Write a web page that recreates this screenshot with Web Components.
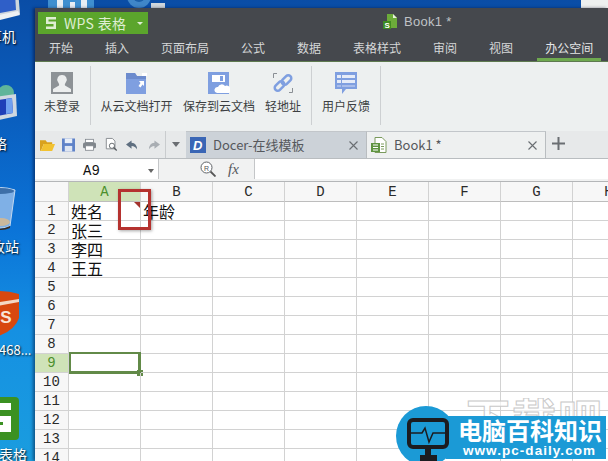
<!DOCTYPE html>
<html lang="zh">
<head>
<meta charset="utf-8">
<title>WPS 表格</title>
<style>
    html, body { margin: 0; height: 100%; overflow: hidden; }
</style>
</head>
<body>
<wps-desktop>
    <desktop-item style="left:-18px;top:-12px"><svg width="46" height="36" viewBox="0 0 46 36"><path d="M6 2h30l2 24-26 6-6-6z" fill="#cfd6dc"/><path d="M11 5h22l1 17-21 4z" fill="#2f5fc8"/><path d="M12 28l24-5 2 4-24 6z" fill="#eef1f3"/></svg></desktop-item>
    <desktop-label style="left:-12px;top:29px">算机</desktop-label>
    <desktop-item style="left:-18px;top:84px"><svg width="40" height="42" viewBox="0 0 40 42"><circle cx="24" cy="9" r="8" fill="#5fb59a"/><path d="M4 14l30-4 1 22-27 6-4-6z" fill="#cfd8e0"/><path d="M9 17l21-3 1 15-20 4z" fill="#1f3fb8"/><path d="M24 15l6-1 1 15-7 1z" fill="#6fa0f0"/></svg></desktop-item>
    <desktop-label style="left:-7px;top:136px">络</desktop-label>
    <desktop-item style="left:-14px;top:187px"><svg width="30" height="44" viewBox="0 0 30 44"><path d="M0 3q14-5 29 0l-5 36q-9 4-19 0z" fill="#7fb0e6" stroke="#c4d8ee"/><ellipse cx="14" cy="4" rx="14" ry="3" fill="#3d6fa8"/><ellipse cx="15" cy="35" rx="9" ry="4" fill="#cbb89c"/><path d="M5 40q9 4 19-1v2q-9 4-19 0z" fill="#3a2a20"/></svg></desktop-item>
    <desktop-label style="left:-9px;top:239px">收站</desktop-label>
    <desktop-item style="left:-22px;top:290px"><svg width="42" height="46" viewBox="0 0 42 46"><path d="M0 4q20-6 41 0v24q-4 12-20 18Q4 40 0 28z" fill="#d8480f"/><path d="M4 15l37-6v3l-37 7z" fill="#f4d8c4"/><text x="11" y="33" font-size="17" font-weight="700" fill="#f8e6d8" font-family="Liberation Sans">PS</text></svg></desktop-item>
    <desktop-label style="left:-1px;top:342px;font-size:13px">468...</desktop-label>
    <desktop-item style="left:-24px;top:397px"><svg width="43" height="43" viewBox="0 0 43 43"><rect width="43" height="43" rx="4" fill="#3b9122"/><path d="M11 6h24v7H19v6h16v16H11v-7h16v-3H11z" fill="#fff"/></svg></desktop-item>
    <desktop-label style="left:-1px;top:447px">表格</desktop-label>

    <desktop-item style="left:48px;top:-2px"><svg width="46" height="11" viewBox="0 0 46 11"><rect width="46" height="11" fill="#3f8fd0"/><rect x="9" y="0" width="6" height="11" fill="#e8eef4"/><rect x="22" y="4" width="5" height="7" fill="#e8eef4"/><rect x="33" y="2" width="6" height="9" fill="#e8eef4"/></svg></desktop-item>
    <desktop-item style="left:125px;top:-6px"><svg width="44" height="15" viewBox="0 0 44 15"><circle cx="14" cy="2" r="12" fill="#3f86c8"/><circle cx="14" cy="2" r="6" fill="#1b5fa8"/><rect x="26" y="9" width="14" height="6" fill="#cfd6dc"/></svg></desktop-item>
    <desktop-item style="left:581px;top:0"><svg width="27" height="8"><rect width="27" height="8" fill="#eef0ef"/></svg></desktop-item>

    <wps-window>
        <title-bar slot="top"></title-bar>
        <wps-ribbon slot="top">
            <ribbon-btn label="未登录" w="36">
                <svg width="22" height="22" viewBox="0 0 22 22"><rect width="22" height="22" fill="#8d9296"/><path d="M11 3a4.500 4.500 0 0 1 4 7c-.8 1.400-1.500 2.500-1 3.500l6 3.500v3H2v-3l6-3.500c.5-1-.2-2.100-1-3.500a4.500 4.500 0 0 1 4-7z" fill="#eceeee"/></svg>
            </ribbon-btn>
            <ribbon-sep style="margin-right:-1px"></ribbon-sep>
            <ribbon-btn label="从云文档打开" w="73">
                <svg width="22" height="22" viewBox="0 0 22 22"><path d="M0 1h9l2 3h9v18H0z" fill="#7f9fe0"/><path d="M0 1h9l2 3h9v3H0z" fill="#5f7fc0" opacity=".6"/><path d="M13 9h5v5l-1.500-1.500-2 3-2-1.500 2-3z" fill="#fff"/><rect x="16" y="1" width="5" height="3" fill="#fff"/></svg>
            </ribbon-btn>
            <ribbon-btn label="保存到云文档" w="72">
                <svg width="22" height="22" viewBox="0 0 22 22"><rect width="21" height="22" fill="#7f9fe0"/><rect x="4" y="3" width="13" height="7" fill="#fff"/><rect x="12" y="4" width="3" height="5" fill="#7f9fe0"/><path d="M9 21a3 3 0 0 1 1-6 4 4 0 0 1 7-1 3.500 3.500 0 0 1 5 4 2.500 2.500 0 0 1-1 3z" fill="#fff"/></svg>
            </ribbon-btn>
            <ribbon-btn label="轻地址" w="36">
                <svg width="22" height="22" viewBox="0 0 22 22"><g fill="none" stroke="#8a8f94"><path d="M5 1.500H1.500V6M17 20.500h3.500V16"/></g><g fill="none" stroke="#7f9fe0" stroke-width="2.500"><rect x="2" y="11" width="11" height="6" rx="3" transform="rotate(-45 7.500 14)"/><rect x="9" y="5" width="11" height="6" rx="3" transform="rotate(-45 14.500 8)"/></g></svg>
            </ribbon-btn>
            <ribbon-sep></ribbon-sep>
            <ribbon-btn label="用户反馈" w="48">
                <svg width="22" height="22" viewBox="0 0 22 22"><path d="M0 0h22v17H11l-4 5v-5H0z" fill="#7f9fe0"/><path d="M2 3h18v3H2zM2 8h18v3H2z" fill="#e6ecf8"/><path d="M2 13h18v2H2z" fill="#a9bdea"/><path d="M6 2h1v13H6z" fill="#7f9fe0"/></svg>
            </ribbon-btn>
            <ribbon-sep></ribbon-sep>
        </wps-ribbon>
        <doc-tabs slot="top"></doc-tabs>
        <formula-bar slot="top"></formula-bar>
        <sheet-grid></sheet-grid>
    </wps-window>

    <site-badge></site-badge>
</wps-desktop>

<script>
const CJK = '"Noto Sans CJK SC", "Liberation Sans", sans-serif';

class WpsDesktop extends HTMLElement {
    constructor() {
        super();
        this.attachShadow({ mode: 'open' });
        this.shadowRoot.innerHTML = `
            <style>
                :host {
                    display: block;
                    position: relative;
                    width: 608px;
                    height: 461px;
                    overflow: hidden;
                    font-family: ${CJK};
                    background: linear-gradient(180deg, #0a4da6 0, #0a5dbd 110px, #0b74d8 230px, #1590e2 330px, #1a9ddf 461px);
                }
            </style>
            <slot></slot>
        `;
    }
}

class DesktopItem extends HTMLElement {
    constructor() {
        super();
        this.attachShadow({ mode: 'open' });
        this.shadowRoot.innerHTML = `
            <style>
                :host { display: block; position: absolute; line-height: 0; }
            </style>
            <slot></slot>
        `;
    }
}

class DesktopLabel extends HTMLElement {
    constructor() {
        super();
        this.attachShadow({ mode: 'open' });
        this.shadowRoot.innerHTML = `
            <style>
                :host {
                    display: block;
                    position: absolute;
                    color: #fff;
                    font-size: 14px;
                    line-height: 15px;
                    white-space: nowrap;
                    text-shadow: 1px 1px 2px #000;
                }
            </style>
            <slot></slot>
        `;
    }
}

class WpsWindow extends HTMLElement {
    constructor() {
        super();
        this.attachShadow({ mode: 'open' });
        this.shadowRoot.innerHTML = `
            <style>
                :host {
                    display: flex;
                    flex-direction: column;
                    position: absolute;
                    left: 35px;
                    top: 8px;
                    width: 573px;
                    height: 453px;
                    overflow: hidden;
                    background: #fff;
                    box-shadow: -2px 0 3px rgba(0, 0, 30, 0.45);
                }
            </style>
            <slot name="top"></slot>
            <slot></slot>
        `;
    }
}

class TitleBar extends HTMLElement {
    constructor() {
        super();
        this.attachShadow({ mode: 'open' });
        const tabs = ['开始', '插入', '页面布局', '公式', '数据', '表格样式', '审阅', '视图', '办公空间'];
        this.shadowRoot.innerHTML = `
            <style>
                :host {
                    display: block;
                    height: 54px;
                    background: #45484d;
                    box-sizing: border-box;
                    border-bottom: 1px solid #5e7a50;
                    font-family: ${CJK};
                }
                .top { display: flex; height: 28px; align-items: flex-start; }
                .app {
                    display: flex;
                    align-items: center;
                    width: 110px;
                    height: 22px;
                    margin: 4px 0 0 3px;
                    background: #5ba52c;
                    color: #dfeed3;
                    font-size: 14px;
                    box-sizing: border-box;
                    padding-left: 7px;
                }
                .app .name { margin-left: 7px; white-space: nowrap; letter-spacing: 0.3px; }
                .app .arrow {
                    margin-left: 11px;
                    border: 3px solid transparent;
                    border-top: 3px solid #dfeed3;
                    border-bottom: 0;
                }
                .doc {
                    display: flex;
                    align-items: center;
                    gap: 6px;
                    margin: 6px 0 0 235px;
                    color: #bfc2c5;
                    font: 13px "Liberation Sans", sans-serif;
                    letter-spacing: 0.3px;
                }
                .tabs { display: flex; padding-left: 6px; height: 25px; }
                .tab {
                    color: #d5d7d8;
                    font-size: 12px;
                    line-height: 24px;
                    padding: 0 8px;
                    margin-right: 16px;
                    height: 25px;
                    box-sizing: border-box;
                }
                .tab:last-child { margin-right: 0; border-bottom: 3px solid #6ea94f; color: #e4e6e6; }
            </style>
            <div class="top">
                <div class="app">
                    <svg width="12" height="14" viewBox="0 0 12 14"><path d="M1 1h10v2.500H3.500v2H11V13H1v-2.500h7.500V8H1z" fill="#dfeed3"/></svg>
                    <span class="name">WPS 表格</span>
                    <span class="arrow"></span>
                </div>
                <div class="doc">
                    <svg width="15" height="15" viewBox="0 0 15 15"><path d="M4 0h6l4 4v10H4z" fill="#6cab3a"/><path d="M10 0l4 4h-4z" fill="#e8f2dc"/><rect x="0" y="7" width="8" height="8" fill="#3f8a22"/><text x="1.500" y="14" font-size="8" font-weight="700" fill="#fff" font-family="Liberation Sans">S</text></svg>
                    <span>Book1 *</span>
                </div>
            </div>
            <div class="tabs">${tabs.map(t => `<div class="tab">${t}</div>`).join('')}</div>
        `;
    }
}

class WpsRibbon extends HTMLElement {
    constructor() {
        super();
        this.attachShadow({ mode: 'open' });
        this.shadowRoot.innerHTML = `
            <style>
                :host {
                    display: flex;
                    gap: 10px;
                    height: 69px;
                    box-sizing: border-box;
                    padding: 4px 0 6px 9px;
                    background: #edf0f0;
                    font-family: ${CJK};
                }
            </style>
            <slot></slot>
        `;
    }
}

class RibbonBtn extends HTMLElement {
    constructor() {
        super();
        this.attachShadow({ mode: 'open' });
        this.shadowRoot.innerHTML = `
            <style>
                :host { display: flex; flex-direction: column; align-items: center; flex: none; padding-top: 6px; }
                .icon { height: 22px; line-height: 0; }
                .label { margin-top: 4px; font-size: 12px; line-height: 16px; color: #3c3f42; white-space: nowrap; }
            </style>
            <div class="icon"><slot></slot></div>
            <div class="label">${this.getAttribute('label')}</div>
        `;
        this.style.width = this.getAttribute('w') + 'px';
    }
}

class RibbonSep extends HTMLElement {
    constructor() {
        super();
        this.attachShadow({ mode: 'open' });
        this.shadowRoot.innerHTML = `
            <style>
                :host { display: block; flex: none; width: 1px; background: #cdd0d2; }
            </style>
        `;
    }
}

class DocTabs extends HTMLElement {
    constructor() {
        super();
        this.attachShadow({ mode: 'open' });
        this.shadowRoot.innerHTML = `
            <style>
                :host {
                    display: flex;
                    height: 28px;
                    box-sizing: border-box;
                    background: #e7e9ea;
                    border-bottom: 1px solid #b9bdc0;
                    font-family: ${CJK};
                    line-height: 0;
                }
                .quick { display: flex; align-items: center; width: 130px; padding-left: 5px; box-sizing: border-box; flex: none; }
                .more { display: flex; align-items: center; justify-content: center; width: 21px; height: 27px; flex: none; border-left: 1px solid #c9ccce; box-sizing: border-box; }
                .more i { border: 4px solid transparent; border-top: 5px solid #6a6e72; border-bottom: 0; }
                .tab {
                    display: flex;
                    align-items: center;
                    width: 180px;
                    height: 27px;
                    box-sizing: border-box;
                    padding-left: 4px;
                    flex: none;
                    color: #55585c;
                    font-size: 13px;
                    line-height: 16px;
                    white-space: nowrap;
                    background: #ccd2d8;
                    border-top: 1px solid #c2c6ca;
                }
                .tab.on { background: #eef0f0; width: 180px; border-left: 1px solid #b9bdc0; border-right: 1px solid #b9bdc0; }
                .tab .t { margin-left: 7px; flex: 1; }
                .tab .x { margin-right: 8px; line-height: 0; }
                .plus { margin: 6px 0 0 6px; line-height: 0; }
            </style>
            <div class="quick">
                <svg width="15" height="14" viewBox="0 0 16 14"><path d="M0 2h6l1.500 2H13v2H4L1 13H0z" fill="#d9a21e"/><path d="M4 6h12l-3 7.500H1z" fill="#f2c230"/></svg>
                <svg width="13" height="14" viewBox="0 0 14 14" style="margin-left:7px"><rect width="14" height="14" fill="#5f82c8"/><rect x="3" y="0" width="8" height="5" fill="#e8eef8"/><rect x="3" y="8" width="8" height="6" fill="#dfe6f2"/></svg>
                <svg width="13" height="14" viewBox="0 0 16 14" style="margin-left:8px"><rect x="3" y="0" width="10" height="4" fill="#fff" stroke="#80868c"/><rect x="0" y="4" width="16" height="7" rx="2" fill="#80868c"/><rect x="3" y="8" width="10" height="5.500" fill="#fff" stroke="#80868c"/></svg>
                <svg width="13" height="15" viewBox="0 0 15 15" style="margin-left:9px"><path d="M1.500.5h7l3 3v9h-10z" fill="#fff" stroke="#7d8287"/><circle cx="8" cy="9" r="3" fill="#fff" stroke="#555a5f"/><path d="M10 11l3.500 3.500" stroke="#555a5f" stroke-width="1.500"/></svg>
                <svg width="12" height="12" viewBox="0 0 13 12" style="margin-left:8px"><path d="M6 1L0 5.500 6 10V7q4 0 6 4 0-7-6-7.500z" fill="#5f6f80"/></svg>
                <svg width="12" height="12" viewBox="0 0 13 12" style="margin-left:10px"><path d="M7 1l6 4.500L7 10V7q-4 0-6 4 0-7 6-7.500z" fill="#a9aeb3"/></svg>
            </div>
            <div class="more"><i></i></div>
            <div class="tab">
                <svg width="16" height="16" viewBox="0 0 16 16"><rect width="16" height="16" fill="#3a66b5"/><text x="3" y="13" font-size="13" font-weight="700" font-style="italic" fill="#fff" font-family="Liberation Sans">D</text></svg>
                <span class="t">Docer-在线模板</span>
                <span class="x">${DocTabs.cross}</span>
            </div>
            <div class="tab on">
                <svg width="16" height="16" viewBox="0 0 16 16"><path d="M4 .5h7l4 4v11H4z" fill="#fff" stroke="#7a9a5c"/><rect x="0" y="6" width="9" height="9" fill="#5f9440"/><path d="M2 8h5M2 10.500h5M2 13h5" stroke="#fff"/><path d="M10 7h3M10 9.500h3M10 12h3" stroke="#7a9a5c"/></svg>
                <span class="t">Book1 *</span>
                <span class="x">${DocTabs.cross}</span>
            </div>
            <div class="plus"><svg width="13" height="13" viewBox="0 0 13 13"><path d="M6.500 0v13M0 6.500h13" stroke="#6a6e72" stroke-width="2"/></svg></div>
        `;
    }
}
DocTabs.cross = '<svg width="9" height="9" viewBox="0 0 9 9"><path d="M.5.500l8 8M8.500.500l-8 8" stroke="#6a6e72" stroke-width="1.100"/></svg>';

class FormulaBar extends HTMLElement {
    constructor() {
        super();
        this.attachShadow({ mode: 'open' });
        this.shadowRoot.innerHTML = `
            <style>
                :host {
                    display: flex;
                    height: 23px;
                    box-sizing: border-box;
                    background: #f1f2f2;
                    border-bottom: 1px solid #b4b6b8;
                    padding-bottom: 2px;
                }
                .name {
                    display: flex;
                    align-items: center;
                    width: 124px;
                    background: #fff;
                    border-right: 1px solid #c4c6c8;
                    box-sizing: border-box;
                    font: 14px "Liberation Mono", monospace;
                    color: #111;
                    padding: 3px 0 0 48px;
                    flex: none;
                }
                .name i { margin-left: auto; margin-right: 4px; border: 3px solid transparent; border-top: 4px solid #666; border-bottom: 0; }
                .tools { display: flex; align-items: center; width: 95px; flex: none; padding-left: 41px; box-sizing: border-box; gap: 12px; }
                .fx { font: italic 15px "Liberation Serif", serif; color: #55585c; }
                .input { flex: 1; background: #fff; border-left: 1px solid #c4c6c8; }
            </style>
            <div class="name">A9<i></i></div>
            <div class="tools">
                <svg width="16" height="16" viewBox="0 0 16 16"><circle cx="6.500" cy="6.500" r="5.500" fill="#fff" stroke="#5f6367"/><path d="M10.500 10.500l5 5" stroke="#555" stroke-width="1.800"/><text x="4" y="9.500" font-size="7" fill="#555" font-family="Liberation Sans">R</text></svg>
                <span class="fx">fx</span>
            </div>
            <div class="input"></div>
        `;
    }
}

class SheetGrid extends HTMLElement {
    constructor() {
        super();
        this.attachShadow({ mode: 'open' });
        const cols = ['A', 'B', 'C', 'D', 'E', 'F', 'G', 'H'];
        const names = { 1: '姓名', 2: '张三', 3: '李四', 4: '王五' };
        let html = '<div class="h corner"></div>';
        cols.forEach((c, i) => {
            html += `<div class="h col ${i === 0 ? 'sel' : ''}">${c}</div>`;
        });
        for (let r = 1; r <= 14; r++) {
            html += `<div class="h row ${r === 9 ? 'sel' : ''}">${r}</div>`;
            cols.forEach((c, i) => {
                let text = '';
                let extra = '';
                if (i === 0 && names[r]) text = names[r];
                if (i === 1 && r === 1) text = '年龄';
                if (i === 0 && r === 1) extra = '<span class="note"></span>';
                if (i === 0 && r === 9) extra = '<span class="cursor"></span>';
                html += `<div class="cell">${text}${extra}</div>`;
            });
        }
        this.shadowRoot.innerHTML = `
            <style>
                :host {
                    display: block;
                    position: relative;
                    flex: 1;
                    min-height: 0;
                    overflow: hidden;
                    background: #fff;
                }
                .grid {
                    display: grid;
                    grid-template-columns: 34px repeat(8, 72px);
                    grid-template-rows: 20px;
                    grid-auto-rows: 19px;
                }
                .h, .cell { box-sizing: border-box; border-right: 1px solid #d2d2d2; border-bottom: 1px solid #d2d2d2; }
                .h {
                    display: flex;
                    align-items: center;
                    justify-content: center;
                    background: #f7f7f7;
                    color: #2a2a2a;
                    font: 14px "Liberation Mono", monospace;
                }
                .col { border-bottom-color: #bdbdbd; }
                .h.sel { background: #cfe3b8; color: #4b8f2c; }
                .cell {
                    position: relative;
                    padding-left: 2px;
                    font: 16px/18px ${CJK};
                    color: #111;
                    white-space: nowrap;
                }
                .note {
                    position: absolute;
                    right: 0;
                    top: 0;
                    border-top: 6px solid #a3322c;
                    border-left: 6px solid transparent;
                }
                .cursor {
                    position: absolute;
                    left: 0;
                    top: -2px;
                    width: 72px;
                    height: 22px;
                    box-sizing: border-box;
                    border: 3px solid #628a48;
                    border-width: 2px 3px 3px 2px;
                }
                .cursor::after {
                    content: '';
                    position: absolute;
                    right: -5px;
                    bottom: -5px;
                    width: 6px;
                    height: 6px;
                    background: #628a48;
                }
                .mark {
                    position: absolute;
                    left: 83px;
                    top: 7px;
                    width: 33px;
                    height: 41px;
                    box-sizing: border-box;
                    border: 3px solid #b5322f;
                    box-shadow: 1px 1px 3px rgba(0, 0, 0, 0.35);
                }
            </style>
            <div class="grid">${html}</div>
            <div class="mark"></div>
        `;
    }
}

class SiteBadge extends HTMLElement {
    constructor() {
        super();
        this.attachShadow({ mode: 'open' });
        this.shadowRoot.innerHTML = `
            <style>
                :host {
                    display: block;
                    position: absolute;
                    left: 396px;
                    top: 398px;
                    width: 212px;
                    height: 63px;
                    overflow: hidden;
                }
                .ghost {
                    position: absolute;
                    left: 70px;
                    top: 0;
                    height: 18px;
                    overflow: hidden;
                    font: 700 44px/38px ${CJK};
                    letter-spacing: 2px;
                    color: rgba(255, 255, 255, 0.7);
                    -webkit-text-stroke: 1px #c9c9c9;
                    white-space: nowrap;
                }
                .disc { position: absolute; left: 0; top: 8px; width: 60px; height: 60px; border-radius: 50%; background: #1b9ad6; }
                .bar { position: absolute; left: 50px; top: 18px; width: 160px; height: 43px; background: #1b9ad6; }
                .title {
                    position: absolute;
                    left: 62px;
                    top: 19px;
                    color: #fff;
                    font: 700 24px/26px ${CJK};
                    white-space: nowrap;
                }
                .url {
                    position: absolute;
                    left: 67px;
                    top: 45px;
                    color: #fff;
                    font: 700 13.500px/16px "Liberation Sans", sans-serif;
                    letter-spacing: 1.050px;
                    white-space: nowrap;
                }
                svg { position: absolute; left: 10px; top: 19px; }
            </style>
            <div class="ghost">下载吧</div>
            <div class="disc"></div>
            <div class="bar"></div>
            <svg width="44" height="44" viewBox="0 0 44 44">
                <rect x="3" y="3" width="38" height="27" rx="4" fill="#1b9ad6" stroke="#1c1c20" stroke-width="4"/>
                <path d="M3 16h13l3-5 4 14 4-9h14" fill="none" stroke="#1c1c20" stroke-width="1.500"/>
                <rect x="19" y="31" width="6" height="8" fill="#1c1c20"/>
                <rect x="14" y="38" width="17" height="6" fill="#1c1c20"/>
            </svg>
            <div class="title">电脑百科知识</div>
            <div class="url">www.pc-daily.com</div>
        `;
    }
}

customElements.define('wps-desktop', WpsDesktop);
customElements.define('desktop-item', DesktopItem);
customElements.define('desktop-label', DesktopLabel);
customElements.define('wps-window', WpsWindow);
customElements.define('title-bar', TitleBar);
customElements.define('wps-ribbon', WpsRibbon);
customElements.define('ribbon-btn', RibbonBtn);
customElements.define('ribbon-sep', RibbonSep);
customElements.define('doc-tabs', DocTabs);
customElements.define('formula-bar', FormulaBar);
customElements.define('sheet-grid', SheetGrid);
customElements.define('site-badge', SiteBadge);
</script>
</body>
</html>
